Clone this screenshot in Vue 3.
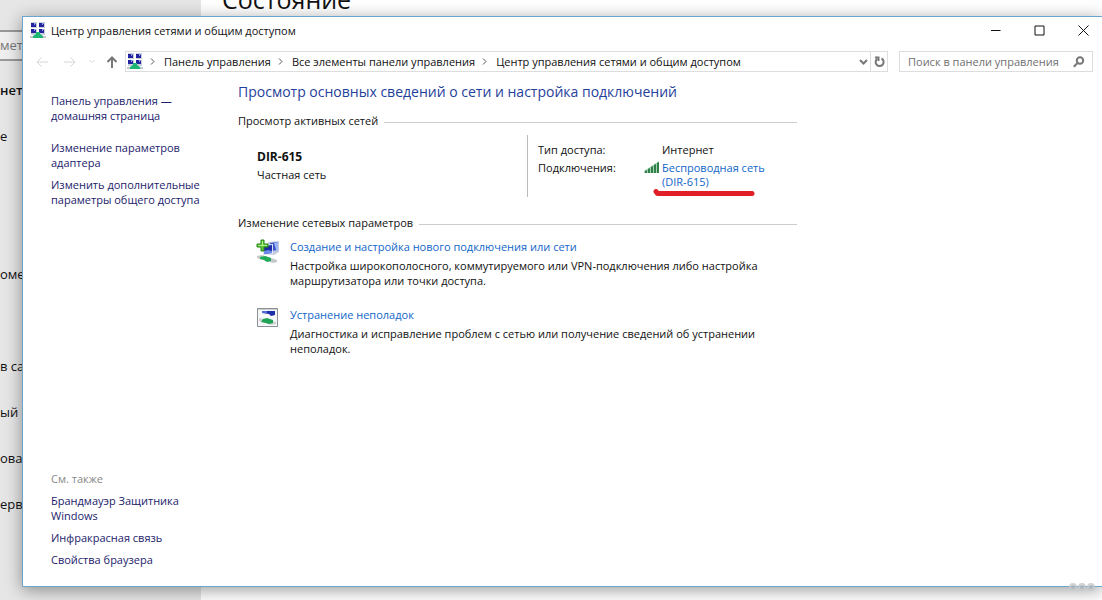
<script setup>
import { ref } from 'vue'

const query = ref('')
const settingsItems = [
  { text: 'нет', kind: 'strong' },
  { text: 'е', kind: 'gap-double' },
  { text: 'омер', kind: 'gap-single' },
  { text: 'в сам', kind: '' },
  { text: 'ый', kind: '' },
  { text: 'ован', kind: '' },
  { text: 'ерв', kind: '' }
]
const crumbs = ['Панель управления', 'Все элементы панели управления', 'Центр управления сетями и общим доступом']
const tasks = ['Изменение параметров адаптера', 'Изменить дополнительные параметры общего доступа']
const seeAlso = ['Брандмауэр Защитника Windows', 'Инфракрасная связь', 'Свойства браузера']
const dots = [0, 1, 2]
</script>

<template>
  <div class="desktop">
    <div class="settings">
      <aside class="settings-nav">
        <div class="settings-search">метр</div>
        <ul class="settings-list">
          <li v-for="item in settingsItems" :key="item.text" :class="item.kind">{{ item.text }}</li>
        </ul>
      </aside>
      <section class="settings-main"><h2>Состояние</h2></section>
    </div>

    <main class="window">
      <svg width="0" height="0" class="defs" aria-hidden="true">
        <symbol id="net-icon" viewBox="0 0 16 17">
          <path fill="#c9cfda" d="M1 0h6v6H1zM9 0h6v6H9zM1 7h6v6H1zM9 7h6v6H9z" />
          <path fill="#23239f" d="M1 1h5v4H1zM9 1h5v4H9zM1 7h5v4H1zM9 7h5v4H9z" />
          <path fill="#8d9ae0" d="M4 1h2v1H5v1H4zM12 1h2v1h-1v1h-1zM4 7h2v1H5v1H4zM12 7h2v1h-1v1h-1z" />
          <path fill="#c3c7cc" d="M0 14h16v2H0z" />
          <path fill="#1db574" d="M6 10h4v2l3 2v2H3v-2l3-2z" />
        </symbol>
      </svg>

      <header class="titlebar">
        <svg width="16" height="17" aria-hidden="true"><use href="#net-icon" /></svg>
        <h1>Центр управления сетями и общим доступом</h1>
        <div class="controls">
          <button aria-label="Свернуть"><svg width="11" height="11"><path d="M1 5.5h9.500" /></svg></button>
          <button aria-label="Развернуть"><svg width="11" height="11"><path d="M1 1h9v9H1z" /></svg></button>
          <button aria-label="Закрыть"><svg width="11" height="11"><path d="M.5.5l10 10M10.500.5l-10 10" /></svg></button>
        </div>
      </header>

      <nav class="navbar">
        <div class="arrows">
          <button class="faded" aria-label="Назад"><svg width="12" height="12"><path d="M12 6H1M5.500 1.500L1 6l4.500 4.500" /></svg></button>
          <button class="faded" aria-label="Вперед"><svg width="12" height="12"><path d="M0 6h11M6.500 1.500L11 6l-4.500 4.500" /></svg></button>
          <button class="faded small" aria-label="Последние страницы"><svg width="6" height="5"><path d="M.5 1L3 3.500 5.500 1" /></svg></button>
          <button class="up" aria-label="Вверх"><svg width="12" height="12"><path d="M6 12V1.500M1.500 6L6 1.500 10.500 6" /></svg></button>
        </div>
        <div class="address">
          <svg width="16" height="17" aria-hidden="true"><use href="#net-icon" /></svg>
          <ol class="crumbs">
            <li v-for="crumb in crumbs" :key="crumb">
              <svg width="5" height="7" aria-hidden="true"><path d="M1 .5l3 3-3 3" /></svg>
              <a href="#">{{ crumb }}</a>
            </li>
          </ol>
          <button class="history" aria-label="Предыдущие расположения"><svg width="9" height="6"><path d="M1 1l3.500 3.500L8 1" /></svg></button>
          <button class="refresh" aria-label="Обновить">
            <svg width="11" height="12"><path d="M7.500 2.500A4 4 0 1 1 3 3M1 1.500h3.500V5" /></svg>
          </button>
        </div>
        <label class="search">
          <input v-model="query" type="text" aria-label="Поиск" placeholder="Поиск в панели управления" />
          <svg width="12" height="12" aria-hidden="true"><circle cx="7" cy="4.500" r="3.200" /><path d="M4.500 7L.8 10.800" /></svg>
        </label>
      </nav>

      <div class="content">
        <aside class="side">
          <div class="links">
            <a href="#" class="home">Панель управления — домашняя страница</a>
            <a v-for="task in tasks" :key="task" href="#">{{ task }}</a>
          </div>
          <div class="links">
            <span class="caption">См. также</span>
            <a v-for="link in seeAlso" :key="link" href="#">{{ link }}</a>
          </div>
        </aside>

        <section class="overview">
          <h2>Просмотр основных сведений о сети и настройка подключений</h2>

          <h3><span>Просмотр активных сетей</span></h3>
          <div class="network">
            <div class="network-name">
              <strong>DIR-615</strong>
              <span>Частная сеть</span>
            </div>
            <dl class="network-info">
              <dt>Тип доступа:</dt>
              <dd>Интернет</dd>
              <dt>Подключения:</dt>
              <dd class="connection">
                <svg class="signal" width="16" height="13" aria-hidden="true">
                  <path fill="#a9d3b4" d="M0 10L15 0v12H0z" />
                  <path fill="#2f8048" d="M1 10l2-1v3H1zM4 8l2-1v5H4zM7 6l2-1v7H7zM10 4l2-1v9h-2zM13 2l2-1v11h-2z" />
                </svg>
                <a href="#">Беспроводная сеть (DIR-615)</a>
                <svg class="marker" width="102" height="8" aria-hidden="true"><path d="M3 2.500L4.500 4.500H99" /></svg>
              </dd>
            </dl>
          </div>

          <h3><span>Изменение сетевых параметров</span></h3>
          <div class="action">
            <svg width="24" height="25" aria-hidden="true">
              <path fill="#c3cbe0" d="M12 3l11-1v11l-5 3-9-1z" />
              <path fill="#3a52c4" d="M14 4l8-1v8l-7 1z" />
              <path fill="#9db4f2" d="M18 4l4-1v8l-2 0z" />
              <path fill="#dfe5f2" d="M7 6l10-1v10l-10 1z" />
              <path fill="#1d2ca6" d="M8 7l8-1v8l-8 1z" />
              <path fill="#6b8aec" d="M8 12l4-1 4 1v2l-8 1z" />
              <path fill="#c3c8ca" d="M1 17l5-1 15 5v2l-4 1-16-5z" />
              <path fill="#21ab57" d="M4 18l5-1 6 2v3l-4 1-3-2-4-1z" />
              <path fill="#5fc936" stroke="#27851a" d="M5 1h3v4h4v3H8v4H5V8H1V5h4z" />
              <path fill="#b4ef8d" d="M6 2h1v4h4v1H2V6h4z" />
            </svg>
            <div>
              <a href="#">Создание и настройка нового подключения или сети</a>
              <p>Настройка широкополосного, коммутируемого или VPN-подключения либо настройка маршрутизатора или точки доступа.</p>
            </div>
          </div>
          <div class="action">
            <svg width="24" height="21" aria-hidden="true">
              <path fill="#f6f7f8" stroke="#8b9095" d="M1.500 1.500h20v18h-20z" />
              <path fill="#cdd1d5" d="M2 2h19v1H2zM3 11l5 1 12 3v2l-5 1-12-4z" />
              <path fill="#1c2ea8" d="M6 4h13v4l-4 1-2-2-7-1z" />
              <path fill="#5470d8" d="M6 4h5v2H6z" />
              <path fill="#1ea354" d="M7 12l4-1 6 2v3l-4 1-3-1-5-1z" />
            </svg>
            <div>
              <a href="#">Устранение неполадок</a>
              <p>Диагностика и исправление проблем с сетью или получение сведений об устранении неполадок.</p>
            </div>
          </div>
        </section>
      </div>
    </main>

    <svg class="badge" width="28" height="10" aria-hidden="true">
      <circle v-for="n in dots" :key="n" :cx="5 + n * 9" cy="5" r="3" />
    </svg>
  </div>
</template>

<style>
body {
  margin: 0;
}
</style>

<style scoped>
* {
  box-sizing: border-box;
}
.desktop {
  position: relative;
  height: 100vh;
  overflow: hidden;
  background: #fff;
  font: 11px/14px "Open Sans", "Noto Sans", sans-serif;
  color: #111;
}
h1, h2, h3, p, ul, ol, dl, dd {
  margin: 0;
  padding: 0;
  font-weight: 400;
}
ul, ol {
  list-style: none;
}
a {
  color: inherit;
  text-decoration: none;
}
button {
  display: flex;
  align-items: center;
  justify-content: center;
  padding: 0;
  border: 0;
  background: none;
}
svg {
  flex: none;
  fill: none;
}
.defs {
  position: absolute;
}

.settings {
  display: flex;
  height: 100%;
}
.settings-nav {
  width: 201px;
  padding-top: 30px;
  background: #e6e6e6;
  font-size: 13px;
  line-height: 20px;
  white-space: nowrap;
}
.settings-search {
  height: 31px;
  padding-top: 3px;
  border: 2px solid #999;
  border-left: 0;
  background: #efefef;
  color: #777;
}
.settings-list {
  display: flex;
  flex-direction: column;
  gap: 26px;
  padding-top: 19px;
}
.settings-list .strong {
  font-weight: 600;
}
.settings-list .gap-single {
  margin-bottom: 46px;
}
.settings-list .gap-double {
  margin-bottom: 92px;
}
.settings-main {
  flex: 1;
  padding-left: 21px;
}
.settings-main h2 {
  margin-top: -17px;
  font-size: 25px;
  line-height: 32px;
}

.window {
  position: absolute;
  inset: 16px 0 13px 22px;
  display: flex;
  flex-direction: column;
  border: 1px solid #6ba5cd;
  border-right: 0;
  background: #fff;
  box-shadow: 0 3px 16px rgba(0, 0, 0, 0.4);
}
.titlebar {
  display: flex;
  align-items: center;
  height: 27px;
  padding-left: 7px;
}
.titlebar h1 {
  flex: 1;
  padding-left: 5px;
  font-size: 11px;
}
.controls {
  display: flex;
  gap: 6px;
}
.controls button {
  width: 38px;
  height: 26px;
}
.controls svg {
  stroke: #111;
}
.navbar {
  display: flex;
  align-items: center;
  height: 35px;
  padding-right: 9px;
}
.arrows {
  display: flex;
  align-items: center;
  gap: 16px;
  width: 102px;
  padding-left: 13px;
}
.arrows svg {
  stroke: #777;
  stroke-width: 2;
}
.arrows .faded svg {
  stroke: #d6d6d6;
  stroke-width: 1;
}
.arrows .small {
  margin: 0 -5px 0 -3px;
}
.address {
  flex: 1;
  display: flex;
  align-items: center;
  height: 21px;
  padding-left: 1px;
  border: 1px solid #ddd;
}
.crumbs {
  flex: 1;
  display: flex;
  white-space: nowrap;
}
.crumbs li {
  display: flex;
  align-items: center;
  gap: 9px;
  padding-left: 7px;
}
.crumbs svg {
  stroke: #555;
}
.history {
  width: 14px;
}
.history svg {
  stroke: #777;
  stroke-width: 2;
}
.refresh {
  width: 17px;
  height: 19px;
  border-left: 1px solid #ddd;
}
.refresh svg {
  stroke: #777;
  stroke-width: 2;
}
.search {
  display: flex;
  align-items: center;
  width: 194px;
  height: 21px;
  margin-left: 11px;
  padding: 0 7px 0 8px;
  border: 1px solid #ddd;
}
.search input {
  flex: 1;
  min-width: 0;
  padding: 0;
  border: 0;
  outline: 0;
  font: inherit;
  background: none;
}
.search input::placeholder {
  color: #707070;
  opacity: 1;
}
.search svg {
  stroke: #777;
  stroke-width: 2;
}

.content {
  flex: 1;
  display: flex;
}
.side {
  display: flex;
  flex-direction: column;
  justify-content: space-between;
  width: 215px;
  padding: 14px 34px 19px 28px;
  line-height: 15px;
  color: #1c1c6b;
}
.links {
  display: flex;
  flex-direction: column;
  gap: 7px;
}
.home {
  width: 130px;
  margin-bottom: 10px;
}
.caption {
  color: #888;
}
.overview {
  flex: 1;
  max-width: 559px;
}
.overview h2 {
  padding-top: 3px;
  font-size: 14px;
  line-height: 20px;
  color: #1f419b;
  white-space: nowrap;
}
.overview h3 {
  display: flex;
  align-items: center;
  gap: 6px;
  font-size: 11px;
  line-height: 14px;
  margin-top: 12px;
}
.overview h3::after {
  content: "";
  flex: 1;
  height: 1px;
  margin-top: 3px;
  background: #ccc;
}
.network {
  display: flex;
  min-height: 62px;
  margin: 7px 0 19px;
}
.network-name {
  display: flex;
  flex-direction: column;
  gap: 4px;
  width: 289px;
  padding: 15px 0 0 19px;
}
.network-name strong {
  font-size: 12px;
}
.network-info {
  flex: 1;
  display: grid;
  grid-template-columns: 124px 120px;
  align-content: start;
  row-gap: 4px;
  padding: 8px 0 0 10px;
  border-left: 1px solid #bbb;
}
.connection {
  position: relative;
}
.signal {
  position: absolute;
  left: -18px;
  top: 0;
}
.marker {
  position: absolute;
  left: -9px;
  top: 28px;
  stroke: #e01f26;
  stroke-width: 5;
  stroke-linecap: round;
  stroke-linejoin: round;
}
.connection a,
.action a {
  color: #1166c8;
}
.action {
  display: flex;
  gap: 10px;
  padding: 9px 0 0 18px;
  margin-bottom: 10px;
}
.action div {
  padding-top: 1px;
}
.action p {
  margin-top: 4px;
  line-height: 15px;
}
.badge {
  position: absolute;
  right: 6px;
  bottom: 8px;
  fill: #aeb4ba;
  stroke: #c6cace;
  stroke-width: 2;
  opacity: 0.8;
}
</style>
